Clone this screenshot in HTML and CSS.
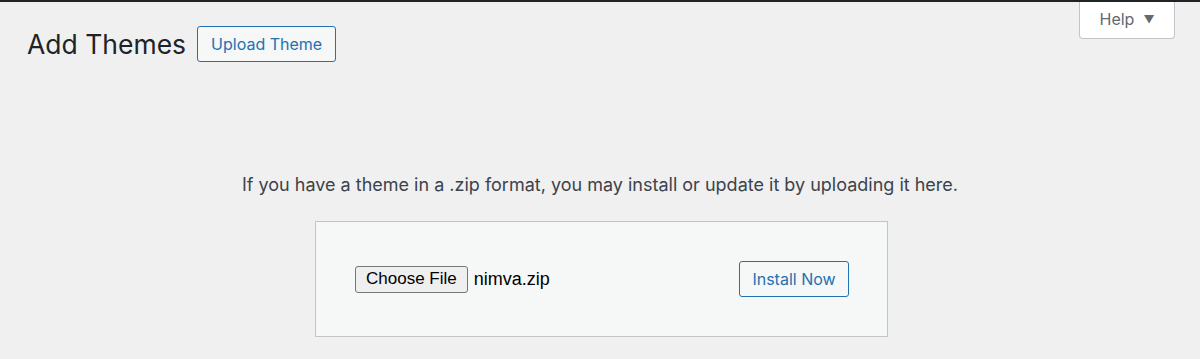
FILE: index.html
```html
<!DOCTYPE html>
<html lang="en">
<head>
  <meta charset="UTF-8" />
  <title>Add Themes</title>
  <link rel="stylesheet" href="styles.css">
</head>
<body>
  <div class="screen-meta-links">
    <button class="help-tab">Help <span class="caret">&#9660;</span></button>
  </div>

  <div class="wrap">
    <div class="title-row">
      <h1>Add Themes</h1>
      <a class="page-title-action" href="#">Upload Theme</a>
    </div>

    <div class="upload-theme">
      <p class="install-help">If you have a theme in a .zip format, you may install or update it by uploading it here.</p>
      <form class="wp-upload-form">
        <div class="file-input">
          <span class="file-btn">Choose File</span>
          <span class="file-name">nimva.zip</span>
        </div>
        <button type="button" class="button">Install Now</button>
      </form>
    </div>
  </div>
</body>
</html>
```

FILE: styles.css
```css
* {
  box-sizing: border-box;
}

body {
  margin: 0;
  background: #f0f0f1;
  color: #3c434a;
  font-family: Inter, "Noto Sans", sans-serif;
  border-top: 2px solid #1d2327;
  height: 359px;
  overflow: hidden;
}

.screen-meta-links {
  display: flex;
  justify-content: flex-end;
  padding-right: 25px;
  height: 0;
}

.help-tab {
  width: 96px;
  height: 38px;
  margin-top: -1px;
  background: #fff;
  border: 1px solid #c3c4c7;
  border-top: none;
  border-radius: 0 0 4px 4px;
  color: #646970;
  font-family: inherit;
  font-size: 16px;
  display: flex;
  align-items: center;
  justify-content: center;
  gap: 9px;
  padding: 0 0 2px;
}

.caret {
  font-size: 11px;
}

.wrap {
  padding: 0 27px;
}

.title-row {
  display: flex;
  align-items: center;
  gap: 11px;
  padding-top: 24px;
}

h1 {
  margin: 0;
  font-size: 26.5px;
  font-weight: 400;
  color: #1d2327;
  line-height: 36px;
}

.page-title-action {
  display: inline-flex;
  align-items: center;
  height: 36px;
  padding: 0 13px;
  border: 1px solid #2271b1;
  border-radius: 3px;
  background: #f6f7f7;
  color: #2271b1;
  font-size: 16px;
  text-decoration: none;
}

.upload-theme {
  display: flex;
  flex-direction: column;
  align-items: center;
}

.install-help {
  margin: 111px 0 24px;
  font-size: 18px;
  line-height: 24px;
}

.wp-upload-form {
  width: 573px;
  height: 116px;
  margin-left: 3px;
  background: #f6f7f7;
  border: 1px solid #c3c4c7;
  display: flex;
  align-items: center;
  justify-content: space-between;
  padding: 0 38px 0 39px;
}

.file-input {
  display: flex;
  align-items: center;
  gap: 6px;
  font-family: "Liberation Sans", Arial, sans-serif;
  font-size: 17px;
  color: #000;
}

.file-name {
  font-size: 18px;
}

.file-btn {
  display: inline-flex;
  align-items: center;
  height: 27px;
  padding: 0 10px;
  background: #efefef;
  border: 1px solid #767676;
  border-radius: 3px;
}

.button {
  height: 36px;
  width: 110px;
  border: 1px solid #2271b1;
  border-radius: 3px;
  background: #f6f7f7;
  color: #2271b1;
  font-family: inherit;
  font-size: 16px;
  cursor: pointer;
}
```
